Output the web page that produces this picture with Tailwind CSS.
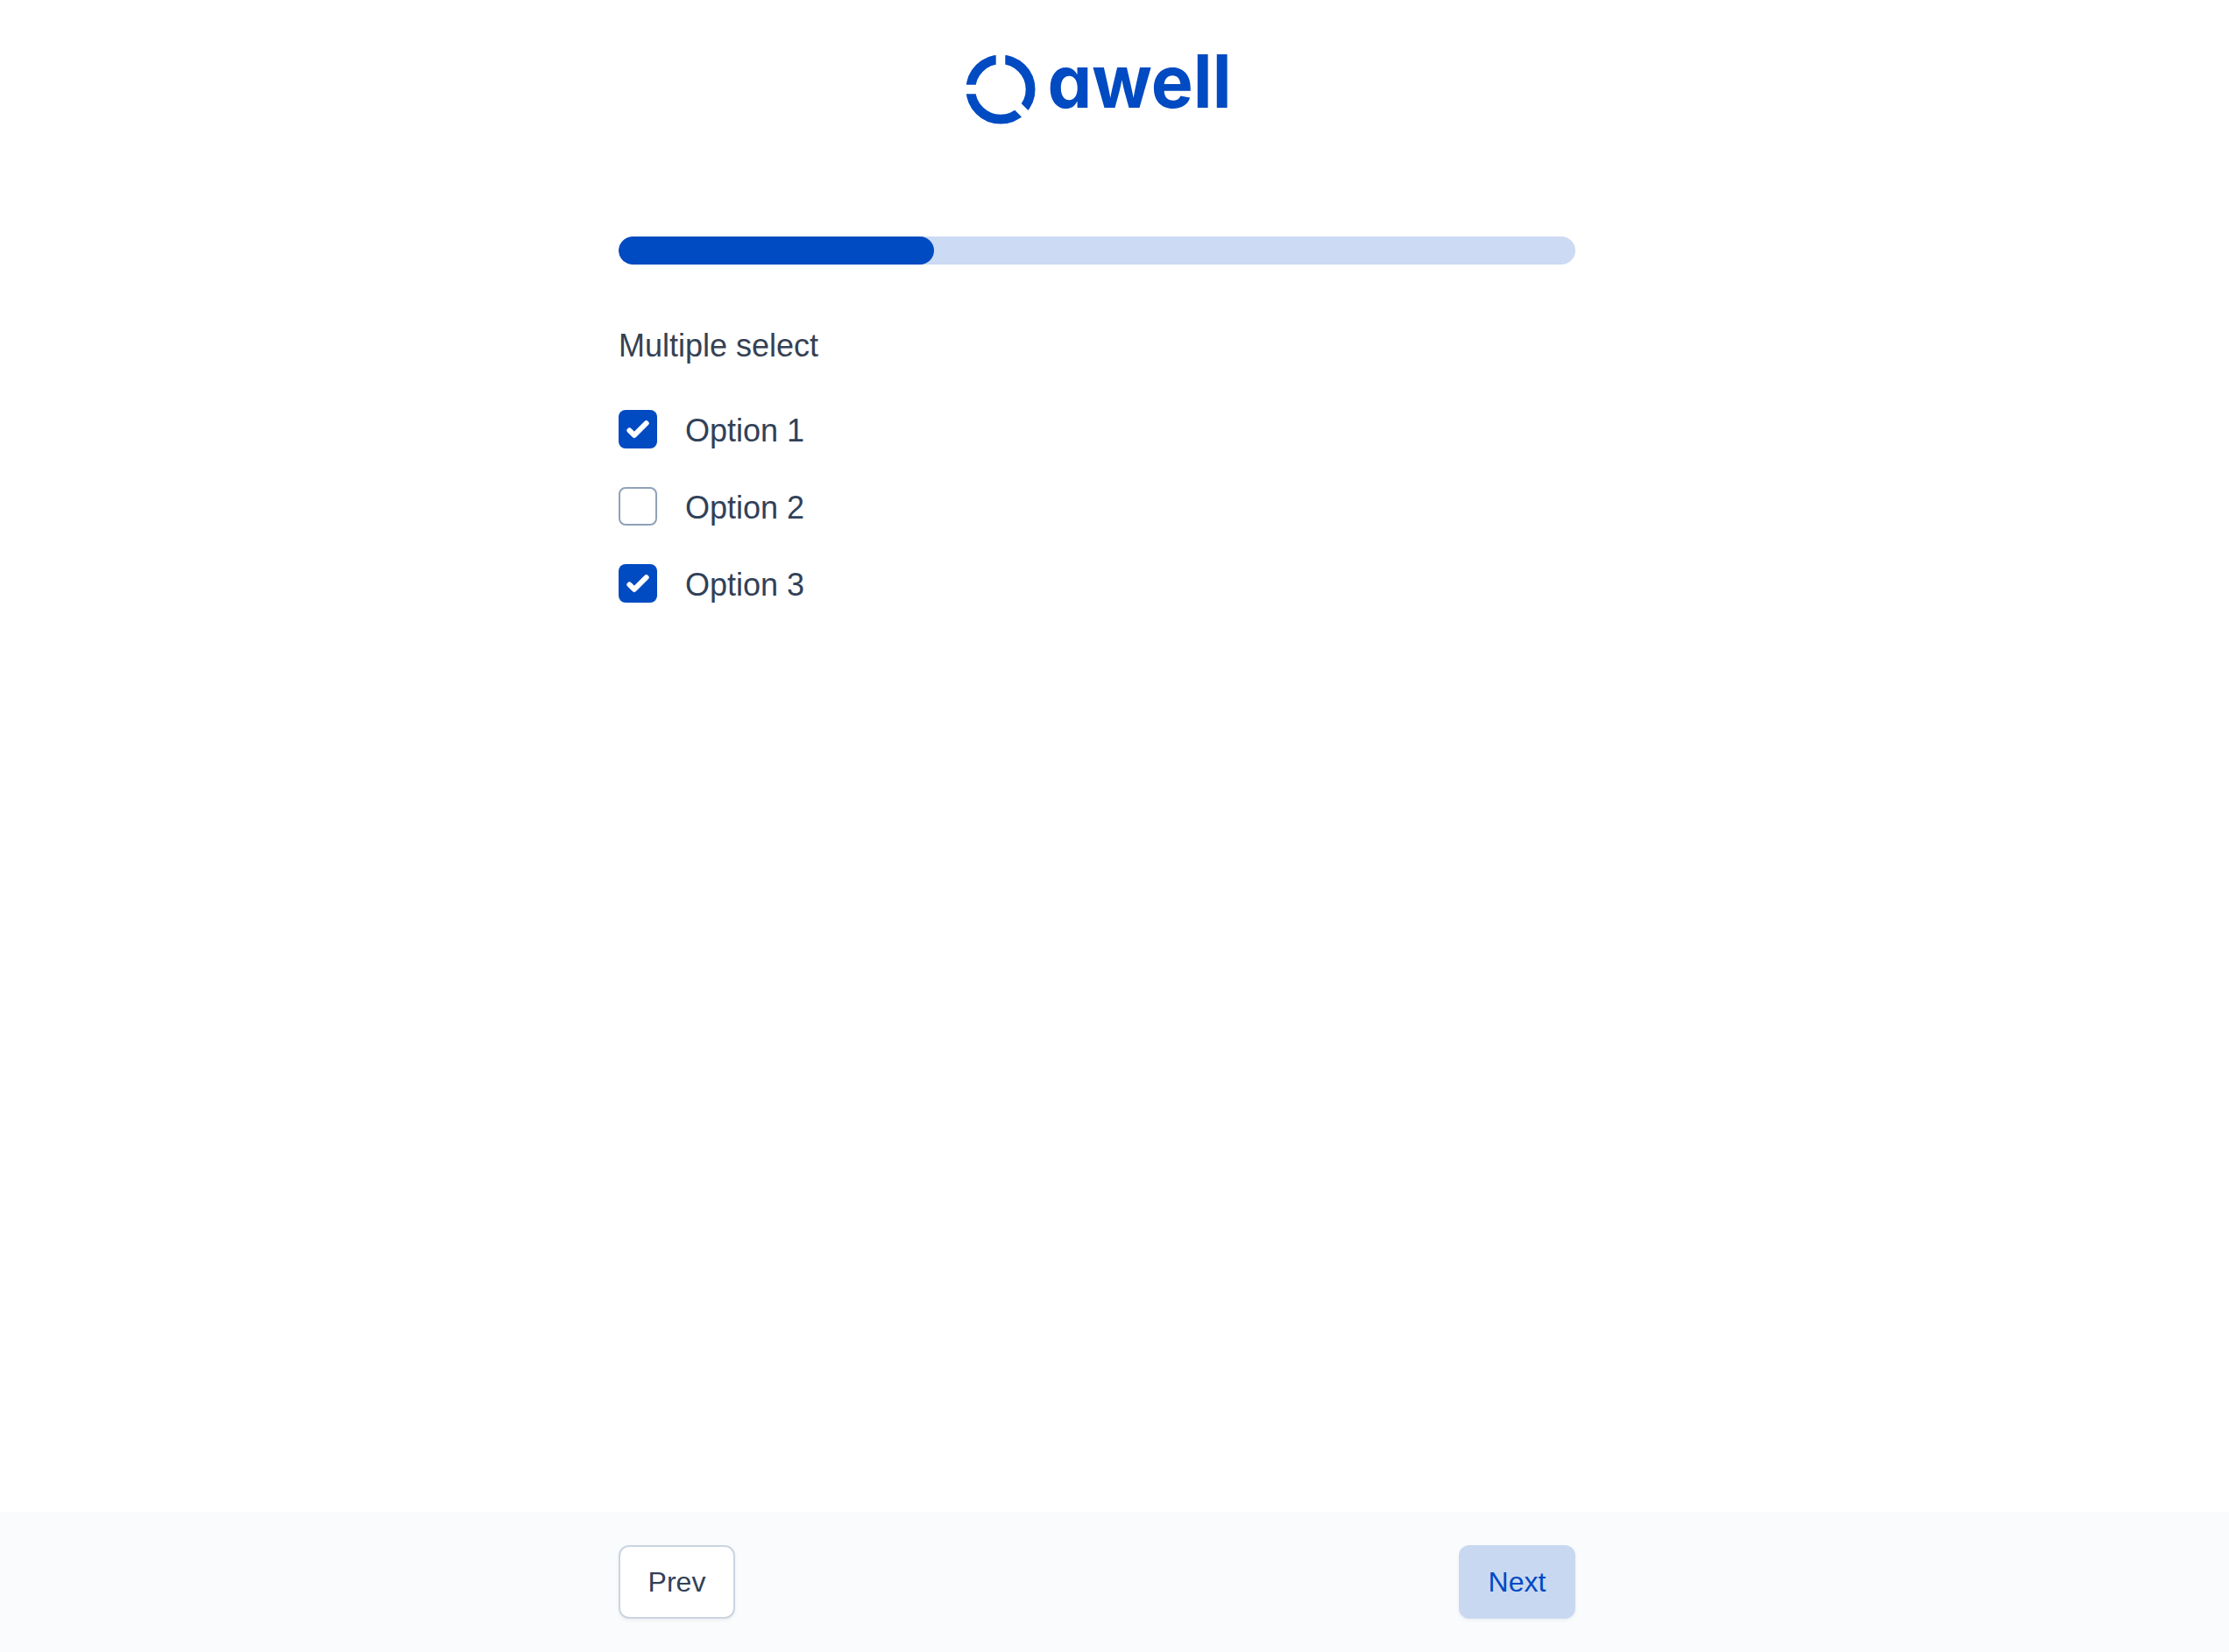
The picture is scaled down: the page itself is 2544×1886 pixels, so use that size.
<!DOCTYPE html>
<html lang="en">
<head>
    <meta charset="UTF-8">
    <meta name="viewport" content="width=device-width, initial-scale=1.0">
    <title>Awell - Multiple select</title>
    <script src="https://cdn.jsdelivr.net/npm/@tailwindcss/browser@4"></script>
</head>
<body class="bg-white font-['Liberation_Sans',Arial,sans-serif] text-slate-700">
    <div class="flex h-screen flex-col">

        <header class="flex h-[270px] shrink-0 pt-10 pl-[1100px]">
            <!-- Logo -->
            <svg class="h-[124px] w-[330px]" viewBox="0 -20 330 124" role="img" aria-label="awell">
                <circle cx="42" cy="42" r="34.1" fill="none" stroke="#004ac2" stroke-width="10.8"/>
                <path d="M42 42V0M42 42H0M42 42L74 74" fill="none" stroke="#fff" stroke-width="10.6"/>
                <text x="95.5" y="63.4" textLength="210" lengthAdjust="spacingAndGlyphs" class="fill-[#004ac2] font-['Inter',sans-serif] text-[84px] font-bold [font-feature-settings:'cv11']">awell</text>
            </svg>
        </header>

        <main class="ml-[706px] w-[1092px] grow">
            <div class="h-8 overflow-hidden rounded-full bg-[#ccdaf3]">
                <div class="h-full rounded-full bg-[#004ac2]" style="width: 33%"></div>
            </div>

            <h1 class="mt-[65px] text-4xl/[56px] text-gray-700">Multiple select</h1>

            <div class="mt-[45px] flex flex-col gap-11">
                <label class="flex h-11 items-center gap-8">
                    <span class="size-11 rounded-lg bg-[#004ac2]">
                        <svg class="size-11 fill-white stroke-white stroke-[0.25]" viewBox="0 0 16 16"><path d="M12.207 4.793a1 1 0 010 1.414l-5 5a1 1 0 01-1.414 0l-2-2a1 1 0 011.414-1.414L6.5 9.086l4.293-4.293a1 1 0 011.414 0z"/></svg>
                    </span>
                    <span class="pt-1 text-4xl/[44px]">Option 1</span>
                </label>
                <label class="flex h-11 items-center gap-8">
                    <span class="size-11 rounded-lg border-2 border-slate-400 bg-white"></span>
                    <span class="pt-1 text-4xl/[44px]">Option 2</span>
                </label>
                <label class="flex h-11 items-center gap-8">
                    <span class="size-11 rounded-lg bg-[#004ac2]">
                        <svg class="size-11 fill-white stroke-white stroke-[0.25]" viewBox="0 0 16 16"><path d="M12.207 4.793a1 1 0 010 1.414l-5 5a1 1 0 01-1.414 0l-2-2a1 1 0 011.414-1.414L6.5 9.086l4.293-4.293a1 1 0 011.414 0z"/></svg>
                    </span>
                    <span class="pt-1 text-4xl/[44px]">Option 3</span>
                </label>
            </div>
        </main>

        <footer class="h-40 shrink-0 bg-[#fafbfd] pt-[38px]">
            <div class="ml-[706px] flex w-[1092px] justify-between">
                <button class="h-[84px] w-[133px] rounded-xl border-2 border-slate-300 bg-white text-[32px] shadow-[0_2px_4px_rgba(0,0,0,0.05)]">Prev</button>
                <button class="h-[84px] w-[133px] rounded-xl bg-[#c9d8f1] text-[32px] text-[#004ac2] shadow-[0_2px_4px_rgba(0,0,0,0.05)]">Next</button>
            </div>
        </footer>

    </div>
</body>
</html>
